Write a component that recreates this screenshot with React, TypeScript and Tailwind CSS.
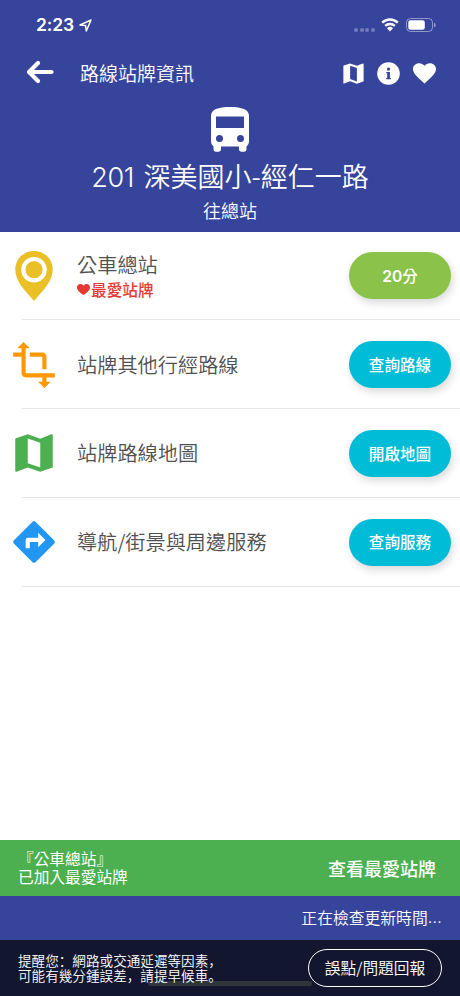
import type { ReactNode } from 'react'
import { MdTransform } from 'react-icons/md'

function MapIcon({ className }: { className: string }) {
  return (
    <svg className={className} viewBox="0 0 24 24" fill="currentColor">
      <path d="M20.5 3l-.16.03L15 5.1 9 3 3.36 4.9c-.21.07-.36.25-.36.48V20.5c0 .28.22.5.5.5l.16-.03L9 18.9l6 2.1 5.64-1.9c.21-.07.36-.25.36-.48V3.5c0-.28-.22-.5-.5-.5zM15 19l-6-2.11V5l6 2.11V19z" />
    </svg>
  )
}

function DirectionsIcon() {
  return (
    <svg className="size-[50px] text-[#2196f3]" viewBox="0 0 24 24" fill="currentColor">
      <path d="M21.71 11.29l-9-9a.996.996 0 0 0-1.41 0l-9 9a.996.996 0 0 0 0 1.41l9 9c.39.39 1.02.39 1.41 0l9-9a.996.996 0 0 0 0-1.41zM14 14.5V12h-4v3H8v-4c0-.55.45-1 1-1h5V7.5l3.5 3.5-3.5 3.5z" />
    </svg>
  )
}

function PinIcon() {
  return (
    <svg className="h-[50px] w-[38px]" viewBox="0 0 38 50">
      <path d="M19 0C8.5 0 .3 8.2.3 18.3.3 30 9 38.5 19 50c10-11.5 18.7-20 18.7-31.7C37.7 8.2 29.5 0 19 0z" fill="#ebbf26" />
      <circle cx="19" cy="18.7" r="10.7" fill="none" stroke="#fff" strokeWidth="4.2" />
    </svg>
  )
}

function StatusBar() {
  return (
    <div className="flex h-[50px] items-center pl-9 pr-[24px]">
      <span className="font-['Inter'] text-[17.5px] font-semibold leading-[50px] tracking-[-0.1px]">2:23</span>
      <svg className="ml-[5px] size-[13px]" viewBox="0 0 13 13" fill="none">
        <path d="M1 6 12 1 7.3 12 6.6 6.5z" stroke="#fff" strokeWidth="1.5" strokeLinejoin="round" />
      </svg>
      <div className="ml-auto flex items-center">
        <div className="mt-[9px] flex gap-[1.6px]">
          {[0, 1, 2, 3].map((i) => (
            <span key={i} className="size-[4px] rounded-full bg-white/30" />
          ))}
        </div>
        <svg className="ml-[6px] h-[14px] w-[18px]" viewBox="0 0 18 14" fill="none">
          <path d="M1.2 4.7a11.2 11.2 0 0 1 15.6 0M4.2 7.9a7 7 0 0 1 9.6 0" stroke="#fff" strokeWidth="2.4" />
          <path d="M6 10.2a4.3 4.3 0 0 1 6 0L9 13.4z" fill="#fff" />
        </svg>
        <svg className="ml-[7px] h-[14px] w-[30px]" viewBox="0 0 30 14" fill="none">
          <rect x=".5" y=".5" width="26" height="13" rx="4" stroke="#fff" strokeOpacity=".45" />
          <rect x="2.3" y="2.3" width="16.5" height="9.4" rx="2.2" fill="#fff" />
          <path d="M28 5v4.4c1-.4 1.6-1.2 1.6-2.2S29 5.4 28 5z" fill="#fff" fillOpacity=".5" />
        </svg>
      </div>
    </div>
  )
}

function Header() {
  return (
    <header className="h-[231.5px] shrink-0 bg-[#37449b] text-white">
      <StatusBar />
      <div className="flex h-[47px] items-center pl-[26px] pr-[24px]">
        <svg className="-mt-[3px] h-[24px] w-[28px]" viewBox="0 0 28 24" fill="none">
          <path d="M12 3 3 12l9 9M3.5 12H25.5" stroke="#fff" strokeWidth="4.2" strokeLinecap="round" strokeLinejoin="round" />
        </svg>
        <h1 className="ml-[26px] text-[19px] font-[350]">路線站牌資訊</h1>
        <div className="ml-auto flex items-center">
          <MapIcon className="size-[27px]" />
          <svg className="ml-[10.5px] size-[23px]" viewBox="0 0 23 23">
            <circle cx="11.5" cy="11.5" r="11.3" fill="#fff" />
            <path d="M10.1 5.7h2.800v2.700h-2.800zM9.300 10h3.600v6h1v1.200H9.200V16h1v-4.800h-.9z" fill="#37449b" />
          </svg>
          <svg className="ml-[13px] h-[21px] w-[23px]" viewBox="0 0 23 21">
            <path d="M11.5 20.5 9.8 19C3.9 13.6 0 10.2 0 6.1 0 2.7 2.7.3 6.2.3c2 0 4 .9 5.3 2.5C12.8 1.2 14.8.3 16.8.3 20.3.3 23 2.7 23 6.1c0 4.1-3.9 7.5-9.8 12.9z" fill="#fff" />
          </svg>
        </div>
      </div>
      <div className="flex flex-col items-center">
        <svg className="mt-[10px] h-[45px] w-[38px]" viewBox="0 0 38 45">
          <path
            fill="#fff"
            fillRule="evenodd"
            d="M0 9C0 2.5 7 0 19 0s19 2.5 19 9v25c0 2.5-.7 4-2.5 5.2V42c0 1.8-1 2.7-2.5 2.7h-2.5c-1.5 0-2.5-.9-2.5-2.7v-2.5H10V42c0 1.8-1 2.7-2.5 2.7H5c-1.5 0-2.500-.9-2.500-2.700v-2.800C.7 38 0 36.500 0 34zM5 9.500V21h28V9.500zM8.500 28a3.500 3.500 0 1 0 0 7 3.500 3.500 0 0 0 0-7zm21 0a3.500 3.500 0 1 0 0 7 3.500 3.500 0 0 0 0-7z"
          />
        </svg>
        <div className="mt-[4px] text-[27px] font-[350] leading-[40px]">
          <span className="mr-[2px] font-['Inter'] tracking-[-0.3px]">201 </span>深美國小-經仁一路
        </div>
        <div className="-mt-[2px] text-[18px] font-[350] leading-[28px]">往總站</div>
      </div>
    </header>
  )
}

type RowProps = {
  icon: ReactNode
  title: string
  action: ReactNode
  favorite?: boolean
  color?: string
}

function Row({ icon, title, action, favorite, color = 'bg-[#00bcd7]' }: RowProps) {
  return (
    <li className="flex h-[88.75px] items-center">
      <div className="flex w-[68px] shrink-0 justify-center">{icon}</div>
      <div className="ml-[9px] flex-1">
        <div className="text-[20.2px] font-[350] leading-[28px] text-[#505050]">{title}</div>
        {favorite && (
          <div className="flex items-center text-[15.7px] font-medium leading-[22px] text-[#e53935]">
            <svg className="mr-[1px] h-[11px] w-[13px]" viewBox="0 0 13 11" fill="currentColor">
              <path d="M6.5 11C2 7.8 0 6 0 3.4 0 1.5 1.5 0 3.4 0c1.2 0 2.4.6 3.1 1.6C7.2.6 8.4 0 9.6 0 11.5 0 13 1.5 13 3.4 13 6 11 7.8 6.5 11z" />
            </svg>
            最愛站牌
          </div>
        )}
      </div>
      <button
        className={`mr-[9px] h-[47px] w-[102px] rounded-full text-[15.6px] font-medium text-white shadow-[2px_4px_8px_rgba(0,0,0,0.15)] ${color}`}
      >
        {action}
      </button>
    </li>
  )
}

function Divider() {
  return <li className="-mt-px ml-[22px] h-px bg-[#e6e6e6]" />
}

function Footer() {
  return (
    <footer className="shrink-0 text-white">
      <div className="flex h-[56px] items-center justify-between bg-[#4caf50] pl-[18px] pr-[24px]">
        <p className="text-[15.7px] leading-[18.5px]">
          『公車總站』
          <br />
          已加入最愛站牌
        </p>
        <a className="text-[18px] font-medium">查看最愛站牌</a>
      </div>
      <div className="flex h-[44px] items-center justify-end bg-[#37449b] pr-[18px] text-[15.8px] font-[350]">
        正在檢查更新時間<span className="font-['Inter'] tracking-[0.3px]">...</span>
      </div>
      <div className="relative flex h-[56px] items-center justify-between bg-[#12162f] pl-[18px] pr-[18px]">
        <span className="absolute bottom-[10px] left-[148px] h-[5px] w-[164px] rounded-full bg-[#30343b]" />
        <p className="relative whitespace-nowrap font-['Noto_Sans_CJK_SC',sans-serif] text-[13.6px] font-[350] leading-[15.5px]" lang="zh-CN">
          提醒您：網路或交通延遲等因素，
          <br />
          可能有幾分鍾誤差，請提早候車。
        </p>
        <button className="relative h-[38px] w-[134px] shrink-0 rounded-full border border-white bg-[#12162f] text-[15.7px] font-[350]">
          誤點/問題回報
        </button>
      </div>
    </footer>
  )
}

export default function App() {
  return (
    <div className="flex h-[996px] w-[460px] flex-col overflow-hidden bg-white font-['Noto_Sans_CJK_TC',sans-serif]" lang="zh-TW">
      <Header />
      <main className="flex-1">
        <ul>
          <Row
            icon={<PinIcon />}
            title="公車總站"
            action={<><span className="font-['Inter'] font-semibold">20</span>分</>}
            color="bg-[#8bc34a]"
            favorite
          />
          <Divider />
          <Row icon={<MdTransform className="size-[50px] text-[#ff9800]" />} title="站牌其他行經路線" action="查詢路線" />
          <Divider />
          <Row icon={<MapIcon className="size-[50px] text-[#4caf50]" />} title="站牌路線地圖" action="開啟地圖" />
          <Divider />
          <Row icon={<DirectionsIcon />} title="導航/街景與周邊服務" action="查詢服務" />
          <Divider />
        </ul>
      </main>
      <Footer />
    </div>
  )
}
